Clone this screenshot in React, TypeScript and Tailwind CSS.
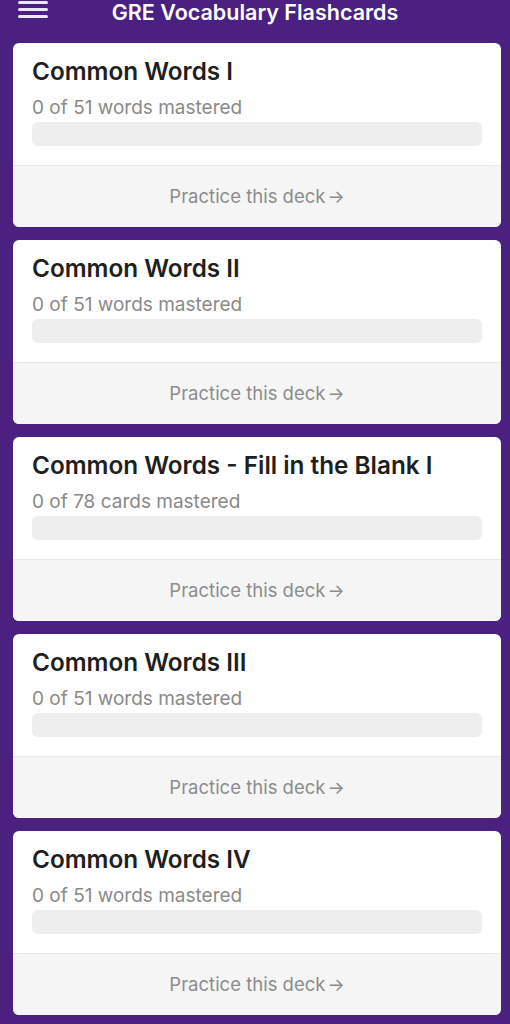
import React from "react";

type Deck = { title: string; mastered: number; total: number; unit: string };

const decks: Deck[] = [
  { title: "Common Words I", mastered: 0, total: 51, unit: "words" },
  { title: "Common Words II", mastered: 0, total: 51, unit: "words" },
  { title: "Common Words - Fill in the Blank I", mastered: 0, total: 78, unit: "cards" },
  { title: "Common Words III", mastered: 0, total: 51, unit: "words" },
  { title: "Common Words IV", mastered: 0, total: 51, unit: "words" },
];

const DeckCard = ({ deck }: { deck: Deck }) => (
  <div className="h-[184px] rounded-[6px] bg-white overflow-hidden flex flex-col">
    <div className="flex-1 px-[19px] pt-[13px]">
      <h2 className="text-[24.3px] font-semibold text-[#1f1f1f] leading-[30px]">
        {deck.title}
      </h2>
      <p className="mt-[10px] text-[19px] text-[#8a8a8a] leading-[24px]">
        {deck.mastered} of {deck.total} {deck.unit} mastered
      </p>
      <div className="mt-[2px] h-[24px] rounded-[6px] bg-[#eeeeee]"></div>
    </div>
    <div className="h-[62px] border-t border-[#e8e8e8] bg-[#f5f5f5] flex items-center justify-center">
      <span className="text-[18.5px] text-[#8c8c8c]">Practice this deck</span>
      <span className="text-[18px] text-[#8c8c8c] ml-[2px]">→</span>
    </div>
  </div>
);

export default function App() {
  return (
    <div
      className="w-[510px] h-[1024px] overflow-hidden bg-[#4a2181]"
      style={{ fontFamily: "Inter, 'Noto Sans', sans-serif" }}
    >
      <div className="h-[24px] relative flex items-center justify-center">
        <div className="absolute left-[18px] top-[1px] flex flex-col gap-[4px]">
          <div className="w-[30px] h-[3px] bg-[#ece6f5] rounded-sm"></div>
          <div className="w-[30px] h-[3px] bg-[#ece6f5] rounded-sm"></div>
          <div className="w-[30px] h-[3px] bg-[#ece6f5] rounded-sm"></div>
        </div>
        <h1 className="text-[21.5px] font-semibold text-white leading-[24px]">
          GRE Vocabulary Flashcards
        </h1>
      </div>
      <div className="pt-[19px] pl-[13px] pr-[9px] flex flex-col gap-[13px]">
        {decks.map((d) => (
          <DeckCard key={d.title} deck={d} />
        ))}
      </div>
    </div>
  );
}
